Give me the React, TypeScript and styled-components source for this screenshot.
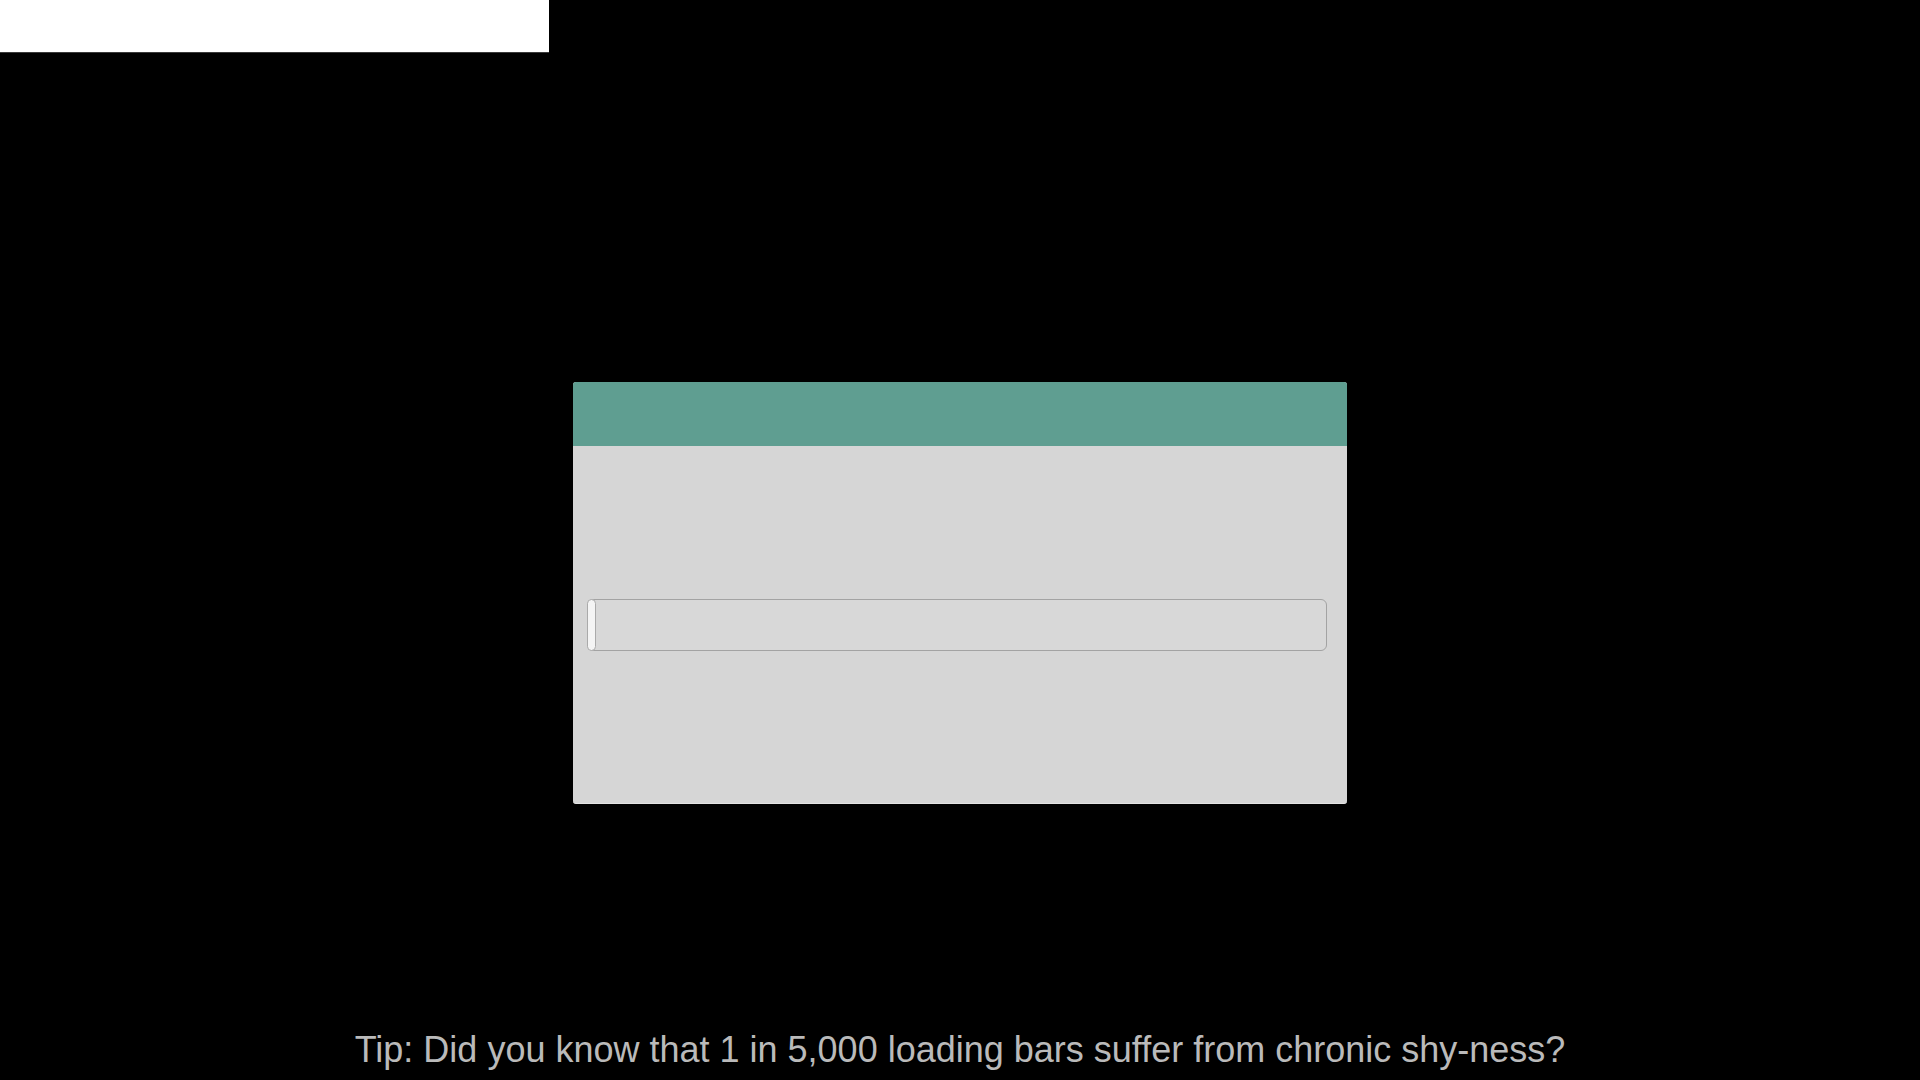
import React from "react";
import styled, { createGlobalStyle } from "styled-components";

const GlobalStyle = createGlobalStyle`
  html, body {
    margin: 0;
    padding: 0;
    background: #000000;
    height: 100%;
  }
  #root {
    min-height: 100vh;
  }
`;

const Page = styled.div`
  min-height: 100vh;
  display: flex;
  flex-direction: column;
  background: #000000;
  font-family: "Liberation Sans", Arial, sans-serif;
  box-sizing: border-box;
`;

const TopPanel = styled.div`
  width: 549px;
  height: 52px;
  background: #ffffff;
  box-shadow: 0 1px 0 #3a3a3a;
  flex-shrink: 0;
`;

const Stage = styled.main`
  flex: 1;
  display: flex;
  justify-content: center;
  align-items: flex-start;
  padding-top: 330px;
`;

const Dialog = styled.section`
  width: 774px;
  height: 422px;
  display: flex;
  flex-direction: column;
  border-radius: 3px;
  overflow: hidden;
  background: #d6d6d6;
  border-bottom: 1px solid #e4e4e4;
  box-sizing: border-box;
`;

const DialogHeader = styled.header`
  height: 64px;
  flex-shrink: 0;
  background: #5f9e91;
`;

const DialogBody = styled.div`
  flex: 1;
  display: flex;
  align-items: center;
  padding: 0 20px 0 14px;
`;

const ProgressTrack = styled.div`
  width: 740px;
  height: 52px;
  box-sizing: border-box;
  border: 1px solid #a3a3a3;
  border-radius: 6px;
  background: #d8d8d8;
  display: flex;
`;

const ProgressFill = styled.div`
  min-width: 9px;
  margin: -1px 0 -1px -1px;
  box-sizing: border-box;
  border: 1px solid #aaaaaa;
  border-radius: 5px;
  background: #f4f4f4;
`;

const Tip = styled.p`
  margin: 0;
  padding-bottom: 9px;
  text-align: center;
  font-size: 36px;
  line-height: 42px;
  color: #bababa;
`;

export default function App() {
  const percent = 1;
  return (
    <>
      <GlobalStyle />
      <Page>
        <TopPanel />
        <Stage>
          <Dialog>
            <DialogHeader />
            <DialogBody>
              <ProgressTrack>
                <ProgressFill style={{ width: `${percent}%` }} />
              </ProgressTrack>
            </DialogBody>
          </Dialog>
        </Stage>
        <Tip>Tip: Did you know that 1 in 5,000 loading bars suffer from chronic shy-ness?</Tip>
      </Page>
    </>
  );
}
